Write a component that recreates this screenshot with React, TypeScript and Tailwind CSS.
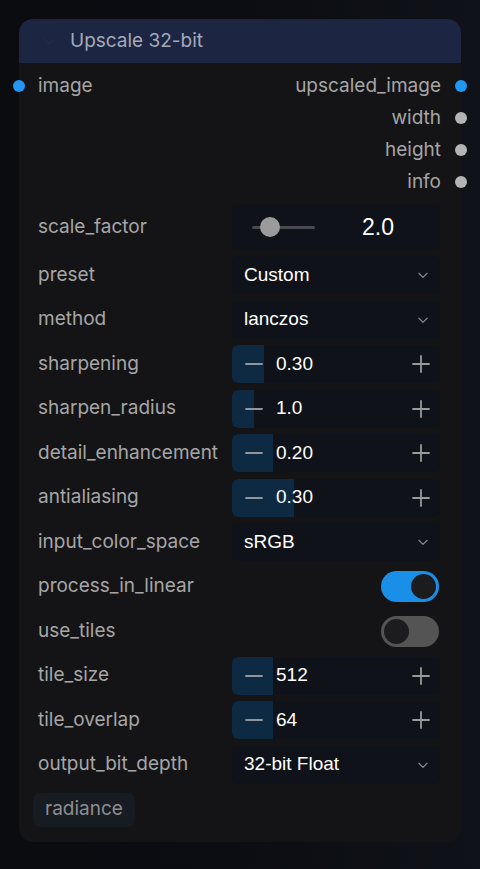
import React from 'react'

const labelFont = { fontFamily: 'Inter, "Noto Sans", sans-serif' }
const valueFont = { fontFamily: '"Liberation Sans", Arial, sans-serif' }

const Chevron = ({ className = '', size = 14 }: { className?: string; size?: number }) => (
  <svg width={size} height={size} viewBox="0 0 24 24" fill="none" stroke="currentColor" strokeWidth="2" strokeLinecap="round" strokeLinejoin="round" className={className}>
    <polyline points="5 9 12 16 19 9" />
  </svg>
)

const Minus = () => (
  <svg width="20" height="20" viewBox="0 0 20 20" stroke="currentColor" strokeWidth="1.8" strokeLinecap="round">
    <line x1="2" y1="10" x2="18" y2="10" />
  </svg>
)

const Plus = () => (
  <svg width="20" height="20" viewBox="0 0 20 20" stroke="currentColor" strokeWidth="1.8" strokeLinecap="round">
    <line x1="2" y1="10" x2="18" y2="10" />
    <line x1="10" y1="2" x2="10" y2="18" />
  </svg>
)

type Widget =
  | { kind: 'combo'; label: string; value: string }
  | { kind: 'number'; label: string; value: string; fill: number }
  | { kind: 'toggle'; label: string; on: boolean }

const widgets: Widget[] = [
  { kind: 'combo', label: 'preset', value: 'Custom' },
  { kind: 'combo', label: 'method', value: 'lanczos' },
  { kind: 'number', label: 'sharpening', value: '0.30', fill: 32 },
  { kind: 'number', label: 'sharpen_radius', value: '1.0', fill: 22 },
  { kind: 'number', label: 'detail_enhancement', value: '0.20', fill: 41 },
  { kind: 'number', label: 'antialiasing', value: '0.30', fill: 62 },
  { kind: 'combo', label: 'input_color_space', value: 'sRGB' },
  { kind: 'toggle', label: 'process_in_linear', on: true },
  { kind: 'toggle', label: 'use_tiles', on: false },
  { kind: 'number', label: 'tile_size', value: '512', fill: 41 },
  { kind: 'number', label: 'tile_overlap', value: '64', fill: 41 },
  { kind: 'combo', label: 'output_bit_depth', value: '32-bit Float' },
]

const outputs = [
  { name: 'upscaled_image', color: 'bg-[#2196f3]' },
  { name: 'width', color: 'bg-[#b4b4b4]' },
  { name: 'height', color: 'bg-[#b4b4b4]' },
  { name: 'info', color: 'bg-[#b4b4b4]' },
]

const WidgetRow = ({ w }: { w: Widget }) => (
  <div className="flex h-[38px] items-center">
    <div className="w-[213px] shrink-0 whitespace-nowrap pl-[19px] text-[19px] text-[#a6a6a6]" style={labelFont}>
      {w.label}
    </div>
    {w.kind === 'combo' && (
      <div className="flex h-full w-[208px] items-center justify-between rounded-md bg-[#101219] pl-3 pr-[10px] text-[19px] text-white" style={valueFont}>
        <span>{w.value}</span>
        <Chevron className="text-[#8a8a8a]" />
      </div>
    )}
    {w.kind === 'number' && (
      <div className="relative flex h-full w-[208px] items-center overflow-hidden rounded-md bg-[#101219] text-[19px] text-white" style={valueFont}>
        <div className="absolute inset-y-0 left-0 rounded-l-md bg-[#0e2a42]" style={{ width: w.fill }} />
        <div className="relative flex w-[44px] items-center justify-center text-[#8f96a0]">
          <Minus />
        </div>
        <span className="relative flex-1">{w.value}</span>
        <div className="relative flex w-[38px] items-center justify-center text-[#9a9a9a]">
          <Plus />
        </div>
      </div>
    )}
    {w.kind === 'toggle' && (
      <div className="flex w-[207px] justify-end">
        <div className={`flex h-[31px] w-[58px] items-center rounded-full px-[3px] ${w.on ? 'justify-end bg-[#1a8fe8]' : 'justify-start bg-[#545454]'}`}>
          <div className="h-[25px] w-[25px] rounded-full bg-[#1c1c1e]" />
        </div>
      </div>
    )}
  </div>
)

export default function App() {
  return (
    <div className="min-h-[869px] w-[480px] bg-gradient-to-r from-[#0a0c10] via-[#0b0d12] to-[#0f1218] pl-[19px] pt-[19px]">
      <div className="w-[442px] rounded-[14px] bg-[#141417] pb-[15px]">
        {/* header */}
        <div className="flex h-[44px] items-center rounded-t-[14px] bg-[#1c2541]">
          <div className="flex w-[51px] justify-center pl-[8px] text-[#222b47]">
            <Chevron size={16} />
          </div>
          <span className="text-[19px] text-[#a3abbb]" style={labelFont}>
            Upscale 32-bit
          </span>
        </div>

        {/* slots */}
        <div className="relative flex pt-[7px]">
          <div className="flex h-[32px] flex-1 items-center">
            <div className="-ml-[6px] h-[12px] w-[12px] rounded-full bg-[#2196f3]" />
            <span className="ml-[13px] text-[19px] text-[#a6a6a6]" style={labelFont}>
              image
            </span>
          </div>
          <div className="flex flex-col items-end">
            {outputs.map((o) => (
              <div key={o.name} className="flex h-[32px] items-center">
                <span className="text-[19px] text-[#a6a6a6]" style={labelFont}>
                  {o.name}
                </span>
                <div className={`ml-[14px] -mr-[6px] h-[12px] w-[12px] rounded-full ${o.color}`} />
              </div>
            ))}
          </div>
        </div>

        {/* scale_factor slider */}
        <div className="mt-[6px] flex h-[46px] items-center">
          <div className="w-[213px] shrink-0 pl-[19px] text-[19px] text-[#a6a6a6]" style={labelFont}>
            scale_factor
          </div>
          <div className="flex h-full w-[208px] items-center rounded-md bg-[#101219]">
            <div className="relative ml-[20px] flex h-[20px] w-[63px] items-center">
              <div className="h-[3px] w-full rounded-full bg-[#4a4a4e]" />
              <div className="absolute left-[8px] top-0 h-[20px] w-[20px] rounded-full bg-[#9b9b9b]" />
            </div>
            <span className="ml-[47px] text-[23px] text-white" style={valueFont}>
              2.0
            </span>
          </div>
        </div>

        <div className="mt-[6px] flex flex-col gap-[6.5px]">
          {widgets.map((w) => (
            <WidgetRow key={w.label} w={w} />
          ))}
        </div>

        <div className="ml-[14px] mt-[9px] inline-flex h-[34px] items-center rounded-lg bg-[#171b22] px-[12px] text-[19px] text-[#8e8e8e]" style={labelFont}>
          radiance
        </div>
      </div>
    </div>
  )
}
